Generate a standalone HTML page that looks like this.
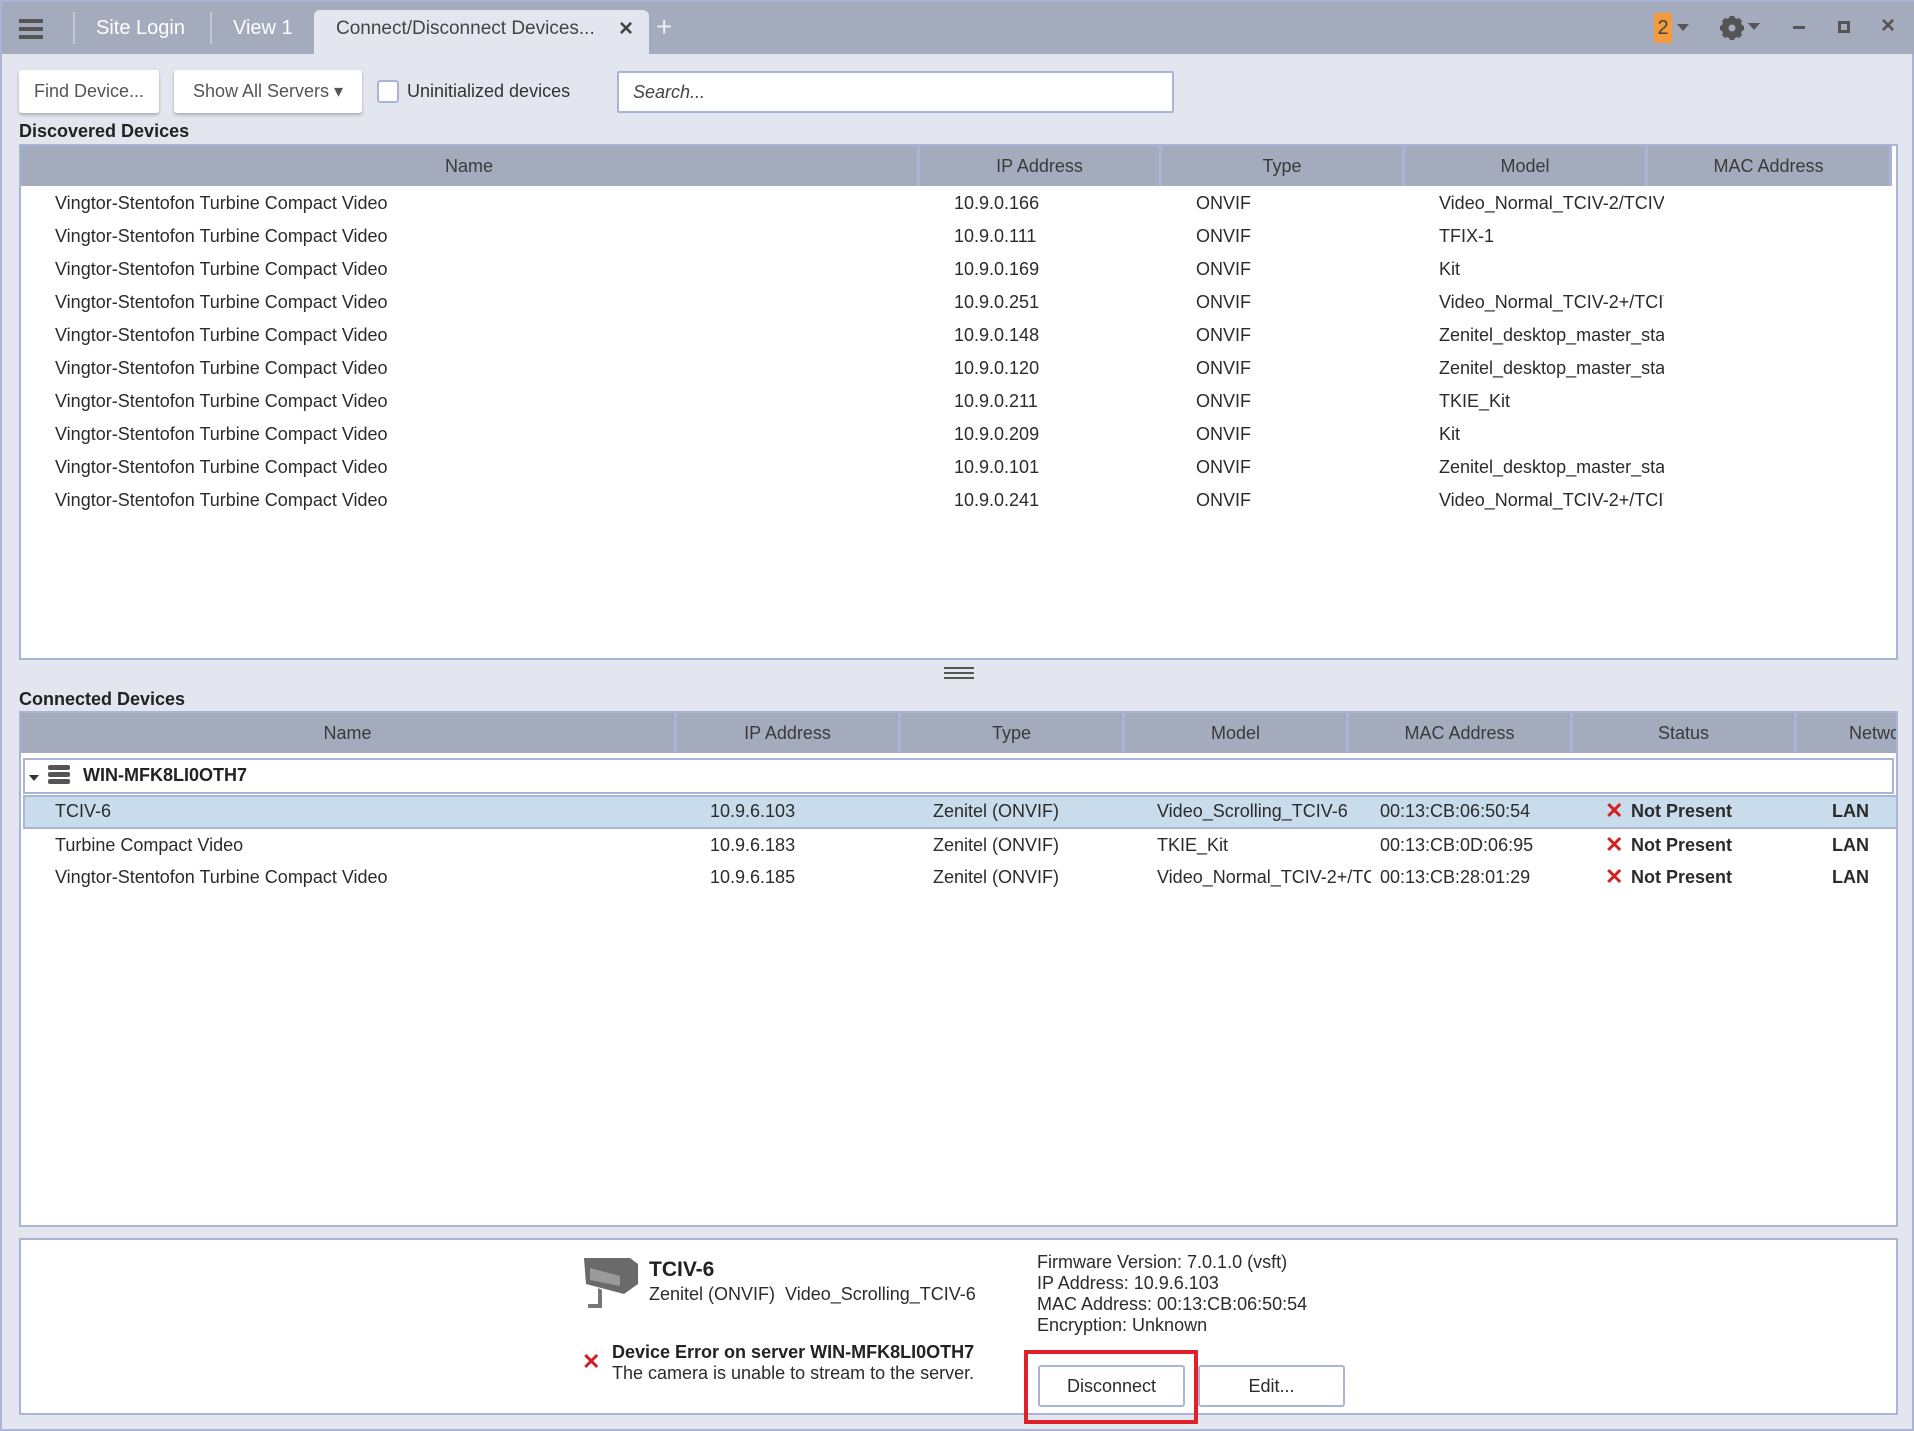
<!DOCTYPE html>
<html><head><meta charset="utf-8"><style>
*{box-sizing:border-box;margin:0;padding:0}
body{width:1914px;height:1431px;background:#e3e6ef;font-family:"Liberation Sans",sans-serif;color:#2b2b2b;position:relative;overflow:hidden;border:2px solid #aab5d6}
.a{position:absolute}
.tabbar{left:0;top:0;width:1914px;height:52px;background:#a3abbd}
.btn{background:#fff;border-radius:3px;box-shadow:0 2px 3px rgba(0,0,0,.25);font-size:18px;color:#555;display:flex;align-items:center;justify-content:center}
.hdr{background:#a3abbd;font-size:18px;color:#3a3a3a}
.hdr div{position:absolute;top:0;height:100%;display:flex;align-items:center;justify-content:center;border-right:3px solid #aab5d6}
.row{position:absolute;left:0;right:0;height:32px;font-size:18px;white-space:nowrap}
.row span{position:absolute;top:5px}
.lbl{font-size:18px;font-weight:bold;color:#222}
.np{font-weight:bold}
.x{color:#d42020;font-weight:bold;font-size:22px}
</style></head><body>
<div class="a tabbar">
 <div class="a" style="left:17px;top:17px;width:24px;height:4px;background:#555;box-shadow:0 8px 0 #555,0 16px 0 #555"></div>
 <div class="a" style="left:71px;top:10px;width:2px;height:32px;background:#c3c8d4"></div>
 <div class="a" style="left:94px;top:15px;font-size:20px;color:#fff">Site Login</div>
 <div class="a" style="left:208px;top:10px;width:2px;height:32px;background:#c3c8d4"></div>
 <div class="a" style="left:231px;top:15px;font-size:20px;color:#fff">View 1</div>
 <div class="a" style="left:312px;top:8px;width:335px;height:44px;background:#e3e6ef;border-radius:6px 6px 0 0"></div>
 <div class="a" style="left:334px;top:16px;font-size:19px;color:#444">Connect/Disconnect Devices...</div>
 <div class="a" style="left:617px;top:13px;font-size:24px;color:#444;font-weight:bold">×</div>
 <div class="a" style="left:654px;top:9px;font-size:28px;color:#eee">+</div>
 <div class="a" style="left:1652px;top:11px;width:18px;height:30px;background:#f39c3e;border-radius:2px;font-size:20px;color:#444;text-align:center;line-height:30px">2</div>
 <div class="a" style="left:1675px;top:22px;border:6px solid transparent;border-top:7px solid #555"></div>
 <svg class="a" style="left:1717px;top:13px" width="26" height="26" viewBox="0 0 26 26"><circle cx="13" cy="13" r="8" fill="none" stroke="#555" stroke-width="5"/><g stroke="#555" stroke-width="5"><line x1="13" y1="1" x2="13" y2="25"/><line x1="1" y1="13" x2="25" y2="13"/><line x1="4.5" y1="4.5" x2="21.5" y2="21.5"/><line x1="21.5" y1="4.5" x2="4.5" y2="21.5"/></g><circle cx="13" cy="13" r="3.5" fill="#a3abbd"/></svg>
 <div class="a" style="left:1746px;top:21px;border:6px solid transparent;border-top:7px solid #555"></div>
 <div class="a" style="left:1791px;top:24px;width:12px;height:3px;background:#555"></div>
 <div class="a" style="left:1836px;top:19px;width:12px;height:12px;border:3px solid #555"></div>
 <div class="a" style="left:1879px;top:10px;font-size:24px;color:#555;font-weight:bold">×</div>
</div>
<div class="a btn" style="left:17px;top:68px;width:140px;height:43px">Find Device...</div>
<div class="a btn" style="left:172px;top:68px;width:188px;height:43px">Show All Servers ▾</div>
<div class="a" style="left:375px;top:78px;width:22px;height:23px;background:#fff;border:2px solid #aab5d6;border-radius:3px"></div>
<div class="a" style="left:405px;top:79px;font-size:18px;color:#333">Uninitialized devices</div>
<div class="a" style="left:615px;top:69px;width:557px;height:42px;background:#fff;border:2px solid #aab5d6;border-radius:2px;font-size:18px;color:#444;font-style:italic;padding:9px 14px">Search...</div>
<div class="a lbl" style="left:17px;top:119px">Discovered Devices</div>
<div class="a" style="left:17px;top:142px;width:1879px;height:516px;background:#fff;border:2px solid #aab5d6">
 <div class="a hdr" style="left:0;top:0;width:1871px;height:40px">
  <div style="left:0;width:899px">Name</div><div style="left:899px;width:242px">IP Address</div><div style="left:1141px;width:243px">Type</div><div style="left:1384px;width:243px">Model</div><div style="left:1627px;width:244px">MAC Address</div>
 </div>
 <div class="a" style="left:0;top:38px;width:1875px">
 <div class="row" style="top:4px"><span style="left:34px">Vingtor-Stentofon Turbine Compact Video</span><span style="left:933px">10.9.0.166</span><span style="left:1175px">ONVIF</span><span style="left:1418px;width:225px;overflow:hidden">Video_Normal_TCIV-2/TCIV-3</span></div>
 <div class="row" style="top:37px"><span style="left:34px">Vingtor-Stentofon Turbine Compact Video</span><span style="left:933px">10.9.0.111</span><span style="left:1175px">ONVIF</span><span style="left:1418px">TFIX-1</span></div>
 <div class="row" style="top:70px"><span style="left:34px">Vingtor-Stentofon Turbine Compact Video</span><span style="left:933px">10.9.0.169</span><span style="left:1175px">ONVIF</span><span style="left:1418px">Kit</span></div>
 <div class="row" style="top:103px"><span style="left:34px">Vingtor-Stentofon Turbine Compact Video</span><span style="left:933px">10.9.0.251</span><span style="left:1175px">ONVIF</span><span style="left:1418px;width:225px;overflow:hidden">Video_Normal_TCIV-2+/TCIV</span></div>
 <div class="row" style="top:136px"><span style="left:34px">Vingtor-Stentofon Turbine Compact Video</span><span style="left:933px">10.9.0.148</span><span style="left:1175px">ONVIF</span><span style="left:1418px;width:225px;overflow:hidden">Zenitel_desktop_master_station</span></div>
 <div class="row" style="top:169px"><span style="left:34px">Vingtor-Stentofon Turbine Compact Video</span><span style="left:933px">10.9.0.120</span><span style="left:1175px">ONVIF</span><span style="left:1418px;width:225px;overflow:hidden">Zenitel_desktop_master_station</span></div>
 <div class="row" style="top:202px"><span style="left:34px">Vingtor-Stentofon Turbine Compact Video</span><span style="left:933px">10.9.0.211</span><span style="left:1175px">ONVIF</span><span style="left:1418px">TKIE_Kit</span></div>
 <div class="row" style="top:235px"><span style="left:34px">Vingtor-Stentofon Turbine Compact Video</span><span style="left:933px">10.9.0.209</span><span style="left:1175px">ONVIF</span><span style="left:1418px">Kit</span></div>
 <div class="row" style="top:268px"><span style="left:34px">Vingtor-Stentofon Turbine Compact Video</span><span style="left:933px">10.9.0.101</span><span style="left:1175px">ONVIF</span><span style="left:1418px;width:225px;overflow:hidden">Zenitel_desktop_master_station</span></div>
 <div class="row" style="top:301px"><span style="left:34px">Vingtor-Stentofon Turbine Compact Video</span><span style="left:933px">10.9.0.241</span><span style="left:1175px">ONVIF</span><span style="left:1418px;width:225px;overflow:hidden">Video_Normal_TCIV-2+/TCIV</span></div>
 </div>
</div>
<div class="a" style="left:942px;top:665px;width:30px;height:2px;background:#555;box-shadow:0 5px 0 #555,0 10px 0 #555"></div>
<div class="a lbl" style="left:17px;top:687px">Connected Devices</div>
<div class="a" style="left:17px;top:709px;width:1879px;height:516px;background:#fff;border:2px solid #aab5d6;overflow:hidden">
 <div class="a hdr" style="left:0;top:0;width:1877px;height:40px">
  <div style="left:0;width:656px">Name</div><div style="left:656px;width:224px">IP Address</div><div style="left:880px;width:224px">Type</div><div style="left:1104px;width:224px">Model</div><div style="left:1328px;width:224px">MAC Address</div><div style="left:1552px;width:224px">Status</div><div style="left:1776px;width:140px;justify-content:flex-start;padding-left:52px;border:0">Network</div>
 </div>
 <div class="a" style="left:2px;top:45px;width:1871px;height:36px;border:2px solid #aab5d6;background:#fff"></div>
 <div class="a" style="left:8px;top:62px;border:5px solid transparent;border-top:6px solid #333"></div>
 <div class="a" style="left:27px;top:52px;width:22px;height:5px;background:#555;border-radius:2px;box-shadow:0 7px 0 #555,0 14px 0 #555"></div>
 <div class="a" style="left:62px;top:52px;font-size:18px;font-weight:bold;color:#222">WIN-MFK8LI0OTH7</div>
 <div class="a" style="left:2px;top:82px;width:1875px;height:34px;background:#c9dcec;border:2px solid #aab5d6"></div>
 <div class="row" style="top:83px"><span style="left:34px">TCIV-6</span><span style="left:689px">10.9.6.103</span><span style="left:912px">Zenitel (ONVIF)</span><span style="left:1136px">Video_Scrolling_TCIV-6</span><span style="left:1359px">00:13:CB:06:50:54</span><span class="x" style="left:1584px;top:2px">✕</span><span class="np" style="left:1610px">Not Present</span><span class="np" style="left:1811px">LAN</span></div>
 <div class="row" style="top:117px"><span style="left:34px">Turbine Compact Video</span><span style="left:689px">10.9.6.183</span><span style="left:912px">Zenitel (ONVIF)</span><span style="left:1136px">TKIE_Kit</span><span style="left:1359px">00:13:CB:0D:06:95</span><span class="x" style="left:1584px;top:2px">✕</span><span class="np" style="left:1610px">Not Present</span><span class="np" style="left:1811px">LAN</span></div>
 <div class="row" style="top:149px"><span style="left:34px">Vingtor-Stentofon Turbine Compact Video</span><span style="left:689px">10.9.6.185</span><span style="left:912px">Zenitel (ONVIF)</span><span style="left:1136px;width:214px;overflow:hidden">Video_Normal_TCIV-2+/TCIV</span><span style="left:1359px">00:13:CB:28:01:29</span><span class="x" style="left:1584px;top:2px">✕</span><span class="np" style="left:1610px">Not Present</span><span class="np" style="left:1811px">LAN</span></div>
</div>
<div class="a" style="left:17px;top:1236px;width:1879px;height:177px;background:#fff;border:2px solid #aab5d6"></div>
<svg class="a" style="left:578px;top:1252px" width="60" height="56" viewBox="0 0 60 56"><path d="M4 4 L50 4 L58 10 L58 30 L44 40 L6 30 Z" fill="#6a6a6a"/><path d="M10 14 L40 22 L40 32 L10 26 Z" fill="#9a9a9a"/><path d="M18 34 L18 50 L8 50 L8 54 L22 54 L22 36 Z" fill="#777"/></svg>
<div class="a" style="left:647px;top:1256px;font-size:21px;font-weight:bold;color:#222">TCIV-6</div>
<div class="a" style="left:647px;top:1282px;font-size:18px">Zenitel (ONVIF) &nbsp;Video_Scrolling_TCIV-6</div>
<div class="a" style="left:1035px;top:1250px;font-size:18px;line-height:21px">Firmware Version: 7.0.1.0 (vsft)<br>IP Address: 10.9.6.103<br>MAC Address: 00:13:CB:06:50:54<br>Encryption: Unknown</div>
<div class="a x" style="left:580px;top:1347px">✕</div>
<div class="a" style="left:610px;top:1340px;font-size:18px;font-weight:bold;color:#222">Device Error on server WIN-MFK8LI0OTH7</div>
<div class="a" style="left:610px;top:1361px;font-size:18px">The camera is unable to stream to the server.</div>
<div class="a" style="left:1022px;top:1348px;width:174px;height:74px;border:4px solid #e0202a"></div>
<div class="a" style="left:1036px;top:1363px;width:147px;height:42px;border:2px solid #aab5d6;border-radius:3px;background:#fff;font-size:18px;display:flex;align-items:center;justify-content:center">Disconnect</div>
<div class="a" style="left:1196px;top:1363px;width:147px;height:42px;border:2px solid #aab5d6;border-radius:3px;background:#fff;font-size:18px;display:flex;align-items:center;justify-content:center">Edit...</div>
</body></html>
